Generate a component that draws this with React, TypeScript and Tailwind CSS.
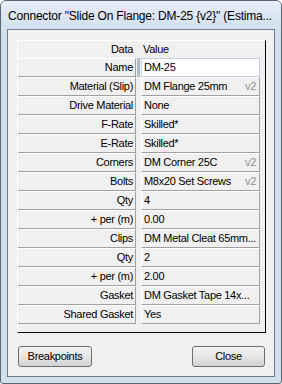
const rows: { label: string; value: string; tag?: string; edit?: boolean }[] = [
  { label: 'Name', value: 'DM-25', edit: true },
  { label: 'Material (Slip)', value: 'DM Flange 25mm', tag: 'v2' },
  { label: 'Drive Material', value: 'None' },
  { label: 'F-Rate', value: 'Skilled*' },
  { label: 'E-Rate', value: 'Skilled*' },
  { label: 'Corners', value: 'DM Corner 25C', tag: 'v2' },
  { label: 'Bolts', value: 'M8x20 Set Screws', tag: 'v2' },
  { label: 'Qty', value: '4' },
  { label: '+ per (m)', value: '0.00' },
  { label: 'Clips', value: 'DM Metal Cleat 65mm...' },
  { label: 'Qty', value: '2' },
  { label: '+ per (m)', value: '2.00' },
  { label: 'Gasket', value: 'DM Gasket Tape 14x...' },
  { label: 'Shared Gasket', value: 'Yes' },
];

const App = () => {
  return (
    <div className="w-[282px] h-[384px] font-['Liberation_Sans',Arial,sans-serif] text-[11px] tracking-[-0.3px] text-black">
      {/* Window frame */}
      <div className="w-full h-full flex flex-col border border-[#5a6572] rounded-t-[6px] rounded-b-[3px] bg-[#d3dfed] overflow-hidden">
        {/* Title bar */}
        <div className="h-[28px] flex items-center pl-[7px] bg-gradient-to-b from-[#e6eef8] to-[#d3dfed]">
          <span className="whitespace-nowrap text-[12px] tracking-[-0.2px] pt-[2px]">
            Connector "Slide On Flange: DM-25 {'{v2}'}" (Estima...
          </span>
        </div>

        {/* Client area */}
        <div className="mx-[6px] mb-[6px] flex-1 border border-[#6f7b89] bg-[#f0f0f0] flex flex-col">
          {/* Property panel */}
          <div className="mt-[10px] ml-[9px] w-[249px] h-[293px] border-t border-l border-t-white border-l-white border-r border-b border-r-black border-b-black flex flex-col">
            {/* Header */}
            <div className="h-[17px] flex items-center">
              <div className="w-[118px] text-right pr-[3px]">Data</div>
              <div className="w-[5px]" />
              <div className="pl-[2px]">Value</div>
            </div>

            {rows.map((r, i) => (
              <div key={i} className="h-[19px] flex">
                <div className="w-[118px] flex items-center justify-end pr-[2px] bg-[#f0f0f0] border-t border-t-white border-b border-r border-b-[#a0a0a0] border-r-[#a0a0a0]">
                  {r.label}
                </div>
                <div className="w-[5px] flex">
                  {r.edit && <div className="ml-[1px] w-[3px] bg-[#aebccb]" />}
                </div>
                {r.edit ? (
                  <div className="w-[119px] flex items-center pl-[2px] bg-white border border-[#c3d2e2]">
                    {r.value}
                  </div>
                ) : (
                  <div className="w-[119px] flex items-center justify-between pl-[2px] pr-[3px] bg-[#f0f0f0] border-t border-l border-t-white border-l-white border-b border-r border-b-[#a0a0a0] border-r-[#a0a0a0]">
                    <span className="whitespace-nowrap">{r.value}</span>
                    {r.tag && <span className="text-[#8f8f8f]">{r.tag}</span>}
                  </div>
                )}
              </div>
            ))}
          </div>

          {/* Buttons */}
          <div className="mt-[13px] flex justify-between pl-[10px] pr-[9px]">
            <button className="w-[74px] h-[21px] rounded-[3px] border border-[#707070] bg-gradient-to-b from-[#f3f3f3] via-[#e6e6e6] to-[#d2d2d2] flex items-center justify-center">
              Breakpoints
            </button>
            <button className="w-[73px] h-[21px] rounded-[3px] border border-[#707070] bg-gradient-to-b from-[#f3f3f3] via-[#e6e6e6] to-[#d2d2d2] flex items-center justify-center">
              Close
            </button>
          </div>
        </div>
      </div>
    </div>
  );
};

export default App;
